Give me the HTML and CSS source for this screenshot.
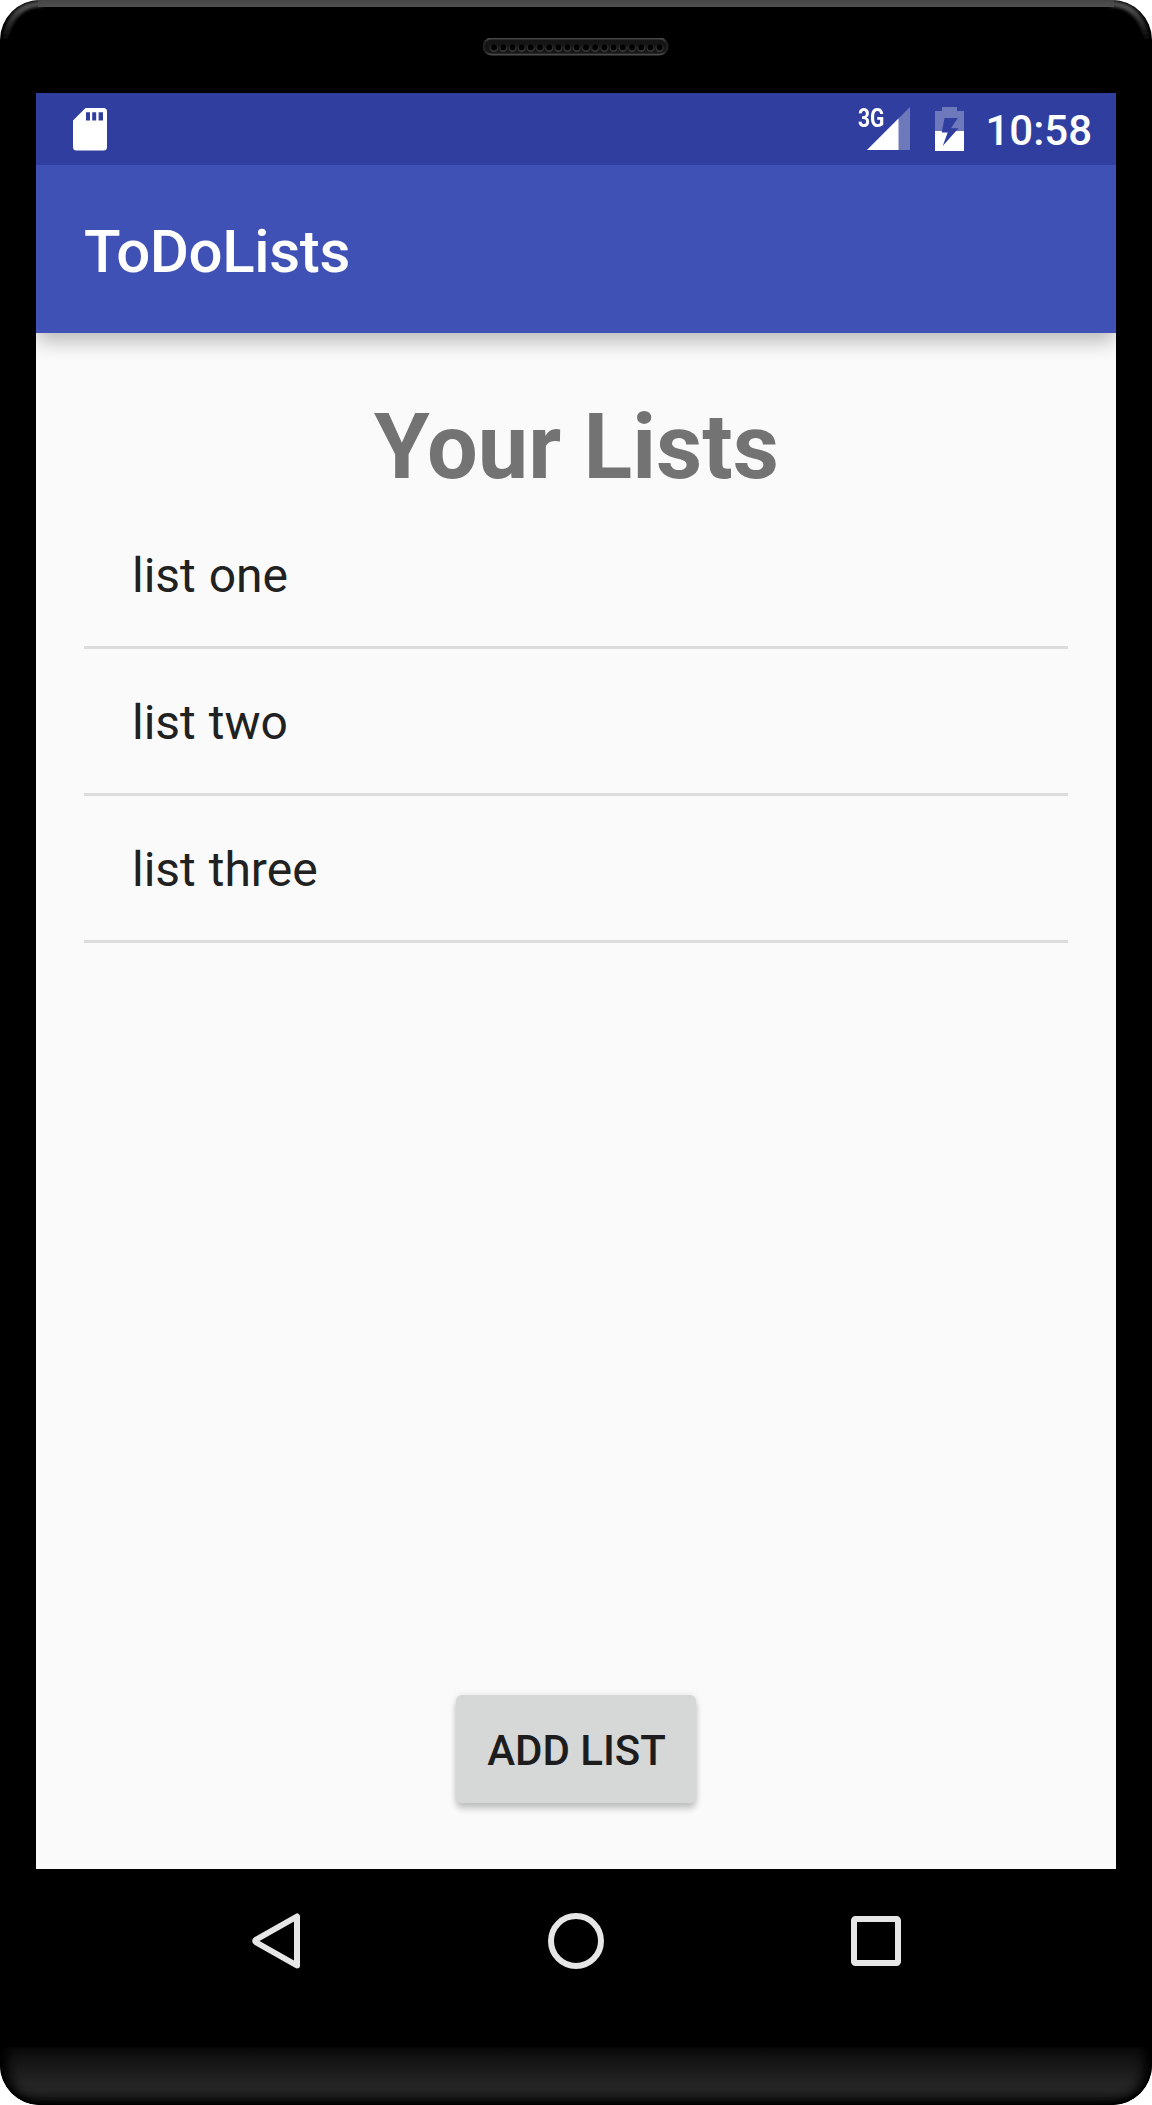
FILE: index.html
```html
<!DOCTYPE html>
<html lang="en">
<head>
<meta charset="utf-8">
<title>ToDoLists</title>
<link rel="stylesheet" href="styles.css">
</head>
<body>
<div class="device">
  <div class="bezel-top">
    <svg class="edge" width="1152" height="60" viewBox="0 0 1152 60">
      <defs>
        <linearGradient id="rim" x1="0" y1="0" x2="0" y2="42" gradientUnits="userSpaceOnUse">
          <stop offset="0" stop-color="#444"/><stop offset=".16" stop-color="#505050"/><stop offset=".4" stop-color="#383838"/><stop offset="1" stop-color="#000"/>
        </linearGradient>
        <filter id="soft" x="-5%" y="-50%" width="110%" height="200%"><feGaussianBlur stdDeviation="1.4"/></filter>
      </defs>
      <path d="M38 0H1114V7H38z" fill="url(#rim)"/>
      <path d="M5 40Q11 4 43 3.5M1147 40Q1141 4 1109 3.5" fill="none" stroke="url(#rim)" stroke-width="6" filter="url(#soft)"/>
    </svg>
    <svg class="speaker" width="186" height="18" viewBox="0 0 186 18">
      <defs>
        <linearGradient id="slot" x1="0" y1="0" x2="0" y2="1"><stop offset="0" stop-color="#484848"/><stop offset=".25" stop-color="#222"/><stop offset=".8" stop-color="#222"/><stop offset="1" stop-color="#484848"/></linearGradient>
        <linearGradient id="hole" x1="0" y1="0" x2="0" y2="1"><stop offset="0" stop-color="#161616"/><stop offset="1" stop-color="#555"/></linearGradient>
        <pattern id="holes" x="6.4" y="4.5" width="9.2" height="10" patternUnits="userSpaceOnUse"><circle cx="4.6" cy="5" r="3.6" fill="#000" stroke="url(#hole)" stroke-width="1"/></pattern>
      </defs>
      <rect x=".5" y=".5" width="184" height="16" rx="8" fill="#151515" stroke="url(#slot)" stroke-width="2"/>
      <rect x="6.4" y="4.5" width="174.8" height="10" fill="url(#holes)"/>
    </svg>
  </div>
  <div class="screen">
    <div class="status-bar">
      <svg class="sd" width="34" height="43" viewBox="0 0 34 43"><path fill="#fff" fill-rule="evenodd" d="M12.5 0H30.500a3.500 3.500 0 0 1 3.500 3.500V39a3.500 3.500 0 0 1-3.500 3.500H3.500A3.500 3.500 0 0 1 0 39V12.500zM13 4.200V12.500H17V4.200zM19.200 4.200V12.500H23.200V4.200zM25.600 4.200V12.500H30V4.200z"/></svg>
      <div class="indicators">
        <div class="signal">
          <span class="network">3G</span>
          <svg width="43" height="43" viewBox="0 0 43 43"><path d="M43 0V43H0z" fill="#fff" fill-opacity=".3"/><path d="M31.500 11.500V43H0z" fill="#fff"/></svg>
        </div>
        <svg class="battery" width="29" height="44" viewBox="0 0 29 44">
          <defs><mask id="bolt"><rect width="29" height="44" fill="#fff"/><path d="M9.500 11H22.800L16 21.300H23.500L7.700 39L12.700 25.500H6.700z" fill="#000"/></mask></defs>
          <g mask="url(#bolt)" fill="#fff"><path d="M7 0H22V4H29V24H0V4H7z" fill-opacity=".3"/><path d="M0 24H29V44H0z"/></g>
        </svg>
        <span class="clock">10:58</span>
      </div>
    </div>
    <header class="app-bar"><span class="app-title">ToDoLists</span></header>
    <main class="content">
      <h1 class="heading">Your Lists</h1>
      <ul class="lists">
        <li class="row">list one</li>
        <li class="row">list two</li>
        <li class="row">list three</li>
      </ul>
      <button class="add">ADD LIST</button>
    </main>
    <nav class="nav-bar">
      <svg width="56" height="56" viewBox="0 0 56 56"><path d="M47 3.500V52.500L6.300 29.500Q4 28 6.300 26.500z" fill="none" stroke="#e6e6e6" stroke-width="6" stroke-linejoin="round"/></svg>
      <svg width="56" height="56" viewBox="0 0 56 56"><circle cx="28" cy="28" r="25" fill="none" stroke="#e6e6e6" stroke-width="6"/></svg>
      <svg width="56" height="56" viewBox="0 0 56 56"><rect x="8" y="6" width="44" height="44" rx="1.500" fill="none" stroke="#e6e6e6" stroke-width="6"/></svg>
    </nav>
  </div>
  <div class="bezel-bottom"></div>
</div>
</body>
</html>
```
FILE: styles.css
```css
body {
  margin: 0;
  background: #fff;
  font-family: Roboto, "Liberation Sans", sans-serif;
}

.device {
  width: 1152px;
  height: 2105px;
  border-radius: 40px;
  overflow: hidden;
  background: #000;
}

.bezel-top {
  position: relative;
  display: flex;
  justify-content: center;
  box-sizing: border-box;
  height: 93px;
  padding-top: 38px;
}

.edge {
  position: absolute;
  top: 0;
  left: 0;
}

.screen {
  width: 1080px;
  height: 1920px;
  margin: 0 auto;
  display: flex;
  flex-direction: column;
}

.status-bar {
  display: flex;
  justify-content: space-between;
  box-sizing: border-box;
  height: 72px;
  padding: 14px 24px 0 37px;
  background: #303f9f;
  color: #fff;
}

.sd {
  margin-top: 1px;
}

.indicators {
  display: flex;
}

.signal {
  display: flex;
  width: 53px;
  height: 43px;
  justify-content: flex-end;
}

.network {
  width: 9px;
  font-size: 26px;
  font-weight: 700;
  line-height: 22px;
  transform: scaleX(0.81);
  transform-origin: 0 0;
}

.battery {
  margin-left: 25px;
}

.clock {
  margin-left: 21px;
  font-size: 42px;
  font-weight: 500;
  line-height: 48px;
}

.app-bar {
  position: relative;
  display: flex;
  align-items: center;
  box-sizing: border-box;
  height: 168px;
  padding: 4px 48px 0;
  background: #3f51b5;
  color: #fff;
  box-shadow: 0 12px 18px -2px rgba(0, 0, 0, 0.2), 0 0 20px rgba(0, 0, 0, 0.1);
  clip-path: inset(0 0 -60px 0);
}

.app-title {
  font-size: 60px;
  font-weight: 500;
  letter-spacing: -0.36px;
}

.content {
  display: flex;
  flex: 1;
  flex-direction: column;
  align-items: center;
  box-sizing: border-box;
  padding: 48px 48px 66px;
  background: #fafafa;
}

.heading {
  margin: 13px 0 0;
  height: 108px;
  padding-left: 1px;
  color: #737373;
  font-size: 90px;
  font-weight: 700;
  line-height: 108px;
}

.lists {
  width: 984px;
  margin: 0;
  padding: 0;
  list-style: none;
}

.row {
  height: 144px;
  padding-left: 48px;
  border-bottom: 3px solid #dcdcdc;
  color: #212121;
  font-size: 48px;
  line-height: 148px;
  word-spacing: 1px;
}

.add {
  width: 240px;
  height: 108px;
  margin-top: auto;
  padding: 3px 0 0 1px;
  border: 0;
  border-radius: 6px;
  background: #d6d8d7;
  color: #1d1d1d;
  font-family: inherit;
  font-size: 42px;
  font-weight: 500;
  box-shadow: 0 6px 6px rgba(0, 0, 0, 0.2), 0 0 6px rgba(0, 0, 0, 0.1);
}

.nav-bar {
  display: flex;
  align-items: center;
  justify-content: space-between;
  box-sizing: border-box;
  height: 144px;
  padding: 0 214px;
}

.bezel-bottom {
  height: 58px;
  margin-top: 34px;
  border-radius: 0 0 40px 40px;
  background: linear-gradient(#0b0b0b, #242424 62%, #242424 75%, #0c0c0c 98%, #000);
  box-shadow: inset 14px 0 12px -6px #000, inset -14px 0 12px -6px #000, inset 0 -4px 5px -2px #000;
}
```
